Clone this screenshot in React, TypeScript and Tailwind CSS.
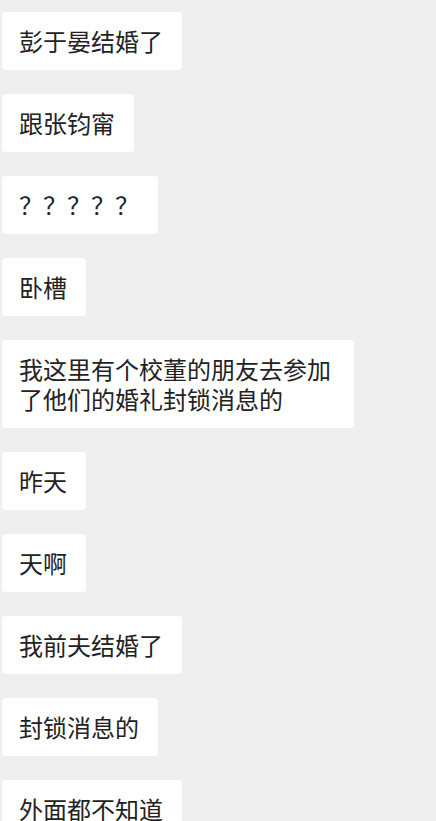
import React from 'react';

const messages: string[] = [
  '彭于晏结婚了',
  '跟张钧甯',
  '？？？？？',
  '卧槽',
  '我这里有个校董的朋友去参加了他们的婚礼封锁消息的',
  '昨天',
  '天啊',
  '我前夫结婚了',
  '封锁消息的',
  '外面都不知道',
];

const Bubble: React.FC<{ text: string }> = ({ text }) => (
  <div className="self-start max-w-[352px] bg-white rounded-[4px] pl-[17px] pr-[19px] py-[14px] text-[24px] leading-[30px] text-[#222222] break-all">
    {text}
  </div>
);

const App: React.FC = () => {
  return (
    <div
      className="h-[821px] overflow-hidden bg-[#efefef] pl-[2px] pt-[12px]"
      style={{ fontFamily: '"Noto Sans CJK SC", "Noto Sans", sans-serif' }}
    >
      <div className="flex flex-col gap-[24px]">
        {messages.map((m, i) => (
          <Bubble key={i} text={m} />
        ))}
      </div>
    </div>
  );
};

export default App;
